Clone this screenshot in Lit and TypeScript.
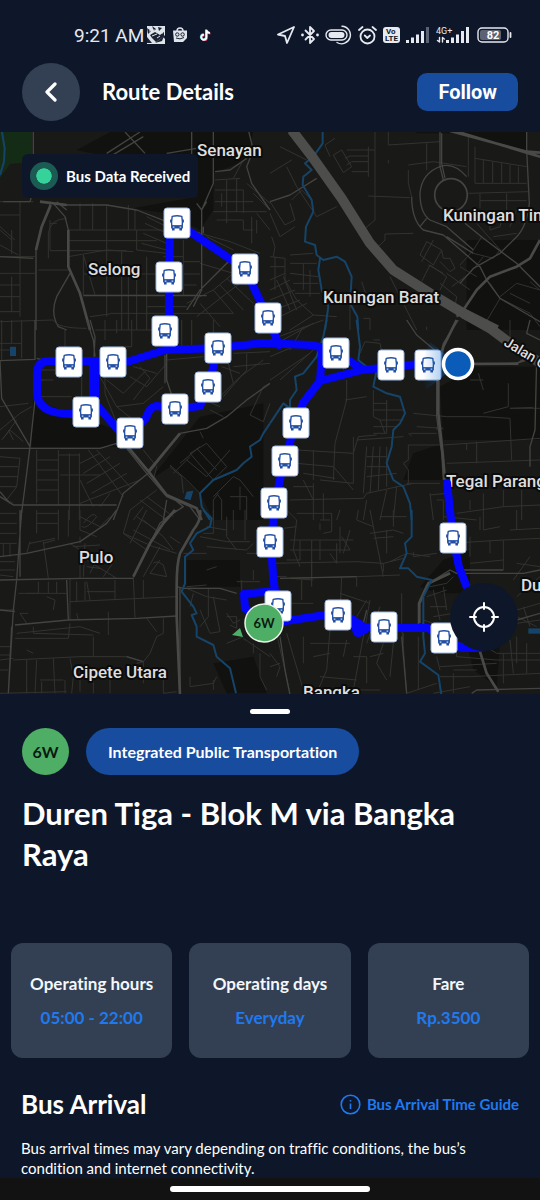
import { LitElement, html, css, svg } from "lit";
import { customElement, property } from "lit/decorators.js";

type Point = [number, number];

const STOPS: Point[] = [
  [177, 223], [169, 277], [165, 331], [245, 269], [268, 318], [218, 348],
  [336, 353], [391, 365], [428, 365], [69, 362], [113, 362], [86, 412],
  [130, 433], [175, 409], [208, 387], [296, 423], [285, 461], [274, 503],
  [270, 542], [278, 606], [338, 615], [384, 627], [453, 538], [444, 638],
];

const ROUTE = [
  "M169 348V277L170 235L177 223L245 269L262 305L268 318L279 345",
  "M86 414H72Q37 414 37 392V374Q37 361 50 361H130L165 350L218 348L262 343L310 345L330 349L348 360L362 369",
  "M94 361V402L120 432H132L146 418Q150 406 157 406L175 409L200 406L208 387L213 368L218 348",
  "M450 363L428 363L391 367L362 370L320 381L303 403L292 436L284 461L275 503L271 542L273 575L276 600",
  "M322 352L320 381",
  "M275 591L244 594L245 608L262 621L286 621L325 615L340 615L352 619L364 627L383 628H428L444 638L462 648H480",
  "M447 483L453 538L459 567L468 590L484 620",
];

const LABELS = [
  { x: 197, y: 156, text: "Senayan" },
  { x: 88, y: 275, text: "Selong" },
  { x: 323, y: 303, text: "Kuningan Barat" },
  { x: 443, y: 221, text: "Kuningan Timur" },
  { x: 446, y: 487, text: "Tegal Parang" },
  { x: 79, y: 563, text: "Pulo" },
  { x: 73, y: 678, text: "Cipete Utara" },
  { x: 303, y: 698, text: "Bangka" },
  { x: 521, y: 591, text: "Duren Tiga" },
];

/* The base map is kept as six tiles, each drawn on a grid of three units per map pixel. */
const TILES = [
  {
    x: 0, y: 130,
    shade: "M230 60L330 6H640V240L600 300L500 250L400 235L590 200V75H300ZM640 6H760L740 90L640 130Z",
    minor: "M0 215H100M60 215V560M0 255H60M0 290L45 330M35 300V372M0 345L55 375M0 300L35 330M150 270V360M150 280H170M145 385V310Q150 268 200 265M240 220V300M278 220V300M205 300H500M205 332H470M150 362H380M320 225V560M205 380L320 360L400 365M385 225V300M405 300V240M440 260L500 290M435 280L500 310M430 310L500 340M425 340L500 360M410 300V360L500 370M0 380H105M0 430H105M0 465H60M0 500H60M35 440V545M0 545H60M115 420H205M250 375L285 495M250 375V495H590M250 432H470M320 432V500M365 365V600M385 430V600M410 420V600M440 380V600M550 330V495M550 395H600M550 432H600M550 465H590M440 530H560M330 550H700M645 150L720 145M680 150V280M710 145V245M645 180H730V250M645 215H760M640 245H800M665 190V230M650 270H730V300H760M755 260V340M770 270V310M600 310L690 335L780 370M620 320L700 360M560 520L640 480L700 430M590 560L680 490L720 460M640 480L700 550M660 465L730 540M680 445L760 520M700 430L740 465M600 520L660 590M740 160L810 220M760 190L810 240M770 250L810 300M490 380H550M700 145L730 90M600 400L700 430M0 575L160 570M270 560L330 552",
    major: "M120 215L200 225L320 225L410 240L500 275L600 310M150 215V235L125 290L108 360V600M160 220L195 260L205 300V410L240 490L270 600M170 215L200 240M210 430L170 500Q150 550 175 590L200 600M100 0V180L90 215H10M320 70L420 6M330 80L430 20M375 6L435 70M640 0V160L605 240V480L580 530M575 0V130M605 240L590 220M605 240L620 215M745 0L760 60L740 110L755 160L810 240M740 85L690 120L645 125M500 70L590 55M640 60H660M610 290V310M250 497H620M0 380L100 385M700 380L600 480L560 540",
    heavy: "M120 215L200 225M205 300V410L240 490L270 600M108 360L125 290L152 225",
    water: "M5 0L14 55L12 95L0 135",
  },
  {
    x: 270, y: 130,
    shade: "M590 330L810 330V600H590ZM440 0H770V60L560 10H440Z",
    minor: "M30 50L110 90M0 130L65 90M50 110L80 170L140 260L200 230M65 210L95 180L120 205M0 215L45 285L75 270L60 220M0 250L30 320L75 290M315 0V270L280 300M295 198L420 203M315 203V200M230 60H315M190 75L215 60L245 110L220 128ZM180 80L165 45L195 25M225 85L240 78H295M230 105L245 95H295M245 125H295M295 50V140M355 0V45L510 35M355 100V90M470 40V120M415 120V160L425 200M415 105L490 95L590 110M595 20V110L595 140M615 50V160H770M615 85L770 110M640 90V160M668 95V160M695 100V160M720 105V160M745 110V160M595 190L775 185M630 190V235M630 212H770M710 190V270M660 270V300L690 290L700 250M740 240L720 290M325 350L345 330V312L430 310M470 335L515 360L490 405L450 375ZM490 330L455 395M515 360L520 385H540L555 415L540 425L510 395M480 405L530 440L510 480M475 405L520 430M455 455L480 405M510 460L560 500L555 530M530 430L600 480M570 405L610 360L635 320M610 370L670 385L690 360M570 410L620 440M545 470L600 430L640 380M690 500L740 460L810 480M700 510L780 550L810 590M720 490L780 520M660 460L690 505L640 590M780 455L810 480M360 440L440 600M60 375L130 370M45 385V450L80 510L130 555L200 560M60 400H140M60 430L145 440M70 460H145M75 490H150M0 380L45 385M0 410H45M15 380V480M0 450L45 430M0 480L60 450M0 510L75 480M0 545L90 510M30 560L110 520M60 600L130 555M100 400V480M120 420V500M20 450L60 540M40 440L80 540M275 455L290 500M240 490V600M5 320L15 350L10 380M280 565H300V600M470 600V590M620 280L700 370M670 320L740 310",
    major: "M0 215L60 195L140 145M510 0V110L520 150M515 10V100L525 145M770 0V60L778 220Q770 290 740 320L690 370L610 415L570 460M425 200Q425 270 460 300L520 315L630 410L650 450L690 505L810 575M450 190Q455 130 510 110Q550 95 590 140M450 190Q450 250 480 270L530 290L610 360M585 280L640 325L740 400L810 470M530 320L610 370M450 290L470 265",
    heavy: "M530 0L770 65L810 68M545 0L810 80M810 330L780 385L740 410L660 440L620 480L580 540L560 560",
    highway: "M65 0L130 85L215 205L300 340L370 420L480 490L580 550L680 600",
    water: "M158 0V40L130 80L105 100L125 120L100 140L98 165L125 210L130 245L108 290L105 335L135 345L140 375L160 390L200 380L225 395L245 440L240 520L262 560L265 600M150 385L145 420L155 480L175 530L165 600",
    ring: true,
  },
  {
    x: 0, y: 320,
    shade: "M100 240L350 330V380H95ZM450 480L600 290L790 250V600H640L600 520L510 440Z",
    minor: "M5 0V120M35 0V70M65 0V115M0 70H65M0 90H30M160 0Q170 25 260 25M285 30H480M315 0V60M395 0V80H320M350 0V40M195 30V100M245 170V240M115 230H215M110 180H160M115 150H165M0 260L85 250M0 330L60 280L95 260M5 360L30 330L70 365M10 355L50 300M25 330L40 360M300 170L350 260L430 250L490 200M320 180L370 220L440 150M390 170L440 200L500 130M350 260L400 300M315 170V220L350 310M400 140L470 160M420 140L450 175L400 240M500 120L610 110M575 0V80M545 0V80M640 0V40M700 100L810 95M665 140L720 160M680 110L700 190M740 100V150L670 230M700 140L810 130M640 250L720 170L790 120M590 230L660 260M520 230L560 250M630 270L670 290M750 285L790 305L810 250M750 285L790 200L810 190M0 410L60 415M0 440L55 440M0 470H55M0 500H50M0 530L40 550M60 415L50 500L20 540M110 390V550M175 390V555M208 400V600M238 400V600M175 405H240M110 420H175M110 450H175M110 480H175M110 510H175M180 465H300M265 390L370 530M290 390L390 500M240 430L300 400M250 460L330 410M260 490L360 430M275 520L380 460M240 550L420 480M240 480L280 560M300 560L330 520M570 400L620 370L680 440L640 480ZM560 420L620 470L690 390M590 385L650 450M510 435L560 480L600 520M540 430L600 380M520 460L570 410M510 440L545 470L550 520M640 530L700 470L720 480L760 530M650 520L665 540V600M655 520L640 540V600M690 530H740V600M720 500V570M420 540L500 600M440 530L520 590M390 570L470 510M400 600L430 560M600 335L610 355M430 390L470 440L460 480",
    major: "M105 0V118L0 122M0 122L5 235L90 380M110 115L130 120M105 240L90 380L75 500L62 600M260 0L280 60L285 110M270 0L285 50L282 110M95 385H300L350 370M380 385L440 460L500 530L570 560L600 600M540 340L450 455L370 520L340 600M540 340L620 325L680 290L740 240L810 190M500 90V180L540 300M0 385H95M0 530L40 555H350M0 515L30 550M500 540L490 600M525 540L550 560L490 600M495 105V190",
    heavy: "M375 370L450 460L500 525L590 565L605 600M540 340L445 455",
    water: "M810 310L790 340L780 360L750 380L755 410L730 430L710 450L640 480L600 520L605 560L630 600",
    ponds: "M30 80H48V108H30ZM560 515L580 512L572 540L553 536Z",
  },
  {
    x: 270, y: 320,
    shade: "M620 140H810V360H520L510 200ZM430 400L520 370V480H400Z",
    minor: "M0 60L160 0M20 70L130 10M60 90L100 20M0 110L70 80M0 180L120 100M30 180L130 90M310 60H330M270 100L285 65L330 70L335 95M230 180V240L195 370L190 480M240 70L220 150M225 240L290 230M310 210V290L330 300H400M310 250H350M310 270H400M350 240V340M310 320H380M310 340H350M330 300L345 340M260 360L400 350M430 280L530 290L640 290L720 295M510 290L500 330M440 320L520 325M415 340L425 348M720 0V60M715 190V260L640 280M720 265H810M720 295L725 420M625 160L640 210M600 180H640M415 375H520L810 355M415 375V420L400 430L415 450V490M590 370V390M620 365V430M530 430L810 420M720 265L790 262M80 390L250 400L265 350L320 345M130 390V480M80 430L190 440L250 510M100 460L195 475M150 480L250 490L250 350M60 540L280 535L290 520L430 490M290 380L280 520M310 380L300 520M330 380L325 510M350 380V500M290 410H350M290 440H350M290 470L380 460M350 510L330 600M380 500L370 600M100 480L130 540M130 490V600M160 520V600M70 500H130M290 540L280 600M200 600L210 570M420 340H500M480 520L490 600M480 525L530 520M500 540H520V600M560 580L700 560L810 555M600 570V540M640 570V520M700 510V560M755 510V600M410 490H510",
    major: "M410 0L440 45L500 95M530 60L500 120L500 290L515 400L520 480M565 0L520 70L510 120M600 130H740L770 120M740 130L775 110L810 120M780 0L770 40L810 60M800 120L795 330L780 380V440",
    heavy: "M560 0L520 80L505 140V280L518 400L525 480M600 132L745 131",
    highway: "M580 -20L660 25L740 85L830 140",
    water: "M170 0L160 50L140 110L100 160L75 170L80 210L60 240V265L40 250L0 310M260 0L270 80L265 120L290 140L320 150L310 200L350 220L390 230L405 280L390 310L370 330L365 380L350 430L370 480L400 500L420 550L425 600",
  },
  {
    x: 0, y: 510,
    shade: "M560 150H720V230H560ZM640 460L760 440L800 550H680Z",
    minor: "M0 10H50M0 40H50M0 70H50M10 100V140M0 100H50M30 100V140M0 155H45M0 180H45M0 195L40 200M110 0V70M175 0V90M205 0V80M110 10H175M110 40H175M90 100L165 85M90 95L80 130M130 95L145 205M165 90L130 100M240 20L300 50L330 20M240 60L290 80M240 80V100M250 40Q280 0 290 20Q260 60 245 50M240 0V60M390 0L370 70L460 110L530 130M410 20L470 60M400 60L510 120M440 0L390 100M430 30L490 80M490 80L520 120M480 150L450 190L500 200L490 165Q470 150 460 160M510 80L540 100M370 70L440 120M480 110L430 200M210 100L240 120V205M255 100L250 200M220 110L300 105M260 150L350 205M290 150L270 190M345 150L310 200M260 170L300 175M210 205V330M115 215V250H55M80 250H200M145 215V250M170 215V250M85 310H60L80 340M230 215V275M255 215V270M210 275L530 260M260 215L270 270M345 210V270M260 245H345M100 350V370L280 375M140 260L165 270L160 300M45 385H205L210 340M50 370L240 350L300 370M230 310L235 330M325 305V375M280 380V440M400 200L405 325M430 210V265M0 300H45M0 435H30M0 450L40 445M80 420L100 430M40 450L240 440L380 440L430 455M80 450V550M110 450L105 550M160 445L165 550M120 510H190M125 515V550M195 510V550M210 445L220 500L215 550M240 470V545M280 510V550M330 500V550M430 455L450 430L470 380L490 370V325M440 325L470 365M410 460L430 455V520M490 500V550M0 410H35M0 480H25M0 550L200 545M570 500V530L640 520M640 510V540M490 550L530 545M560 235L620 260L680 270M580 250L570 290M625 235V320L600 350M600 300L630 370L660 365L640 260M680 310L700 340L720 330M680 320H710V355L690 345M680 400L730 380M640 0V70H610M680 20V80L710 120M700 0V60M735 0V90M620 50L680 60M600 80L680 95H750M620 110L740 120M740 120L760 100M620 180L650 170M760 180V210M710 215H780M740 130H810M725 210V250M550 130H620M560 230L620 225M650 500L640 520M760 400V430M730 385L810 440M780 430V500L800 540",
    major: "M65 0L50 210L40 300L25 550M0 140L80 130L240 95L320 40L350 0M0 210L240 205L400 205M400 200L450 100L480 40L530 0M45 345L205 330L410 325L530 318M35 350L25 550M200 210L205 330M530 230L550 235L660 235L710 250M0 300L45 305M540 230V550M60 0V200M380 440L430 455",
    heavy: "M600 0Q605 30 580 60L540 130Q530 160 530 230V320L540 555M400 200L450 100L490 40L525 0",
    water: "M610 0L635 25L630 50L590 70L570 100L580 120L555 140V220L545 245L580 290L590 310L575 315L590 350L590 380L640 405L650 440L690 475L708 550",
  },
  {
    x: 270, y: 510,
    shade: "M520 150L600 120V250H500L450 230ZM590 400H690L680 530L610 480Z",
    minor: "M50 0L80 30L70 120M0 60L80 50M80 10L185 10M185 10V65L160 70M60 90H250M60 120H240M125 90V200M90 90V150H50M150 90V150M200 100V160L180 130M70 120L90 170M210 50V130M240 60L220 130M215 80L240 120M265 0L260 30L310 50L300 0M310 50L340 200M300 70L370 60L400 70M330 20H410M350 60V130M370 0V50M310 85L370 80M260 155L340 160L400 145M0 160L260 155M360 155L410 130L480 140M60 205L260 200L390 195M60 205L130 210M95 210V270M125 150V230M260 200V230M0 200H50M215 200L210 310M340 160V185M395 250V340L410 550M445 380V540M500 440L510 480M430 125V140L500 130M520 20L620 30M540 100L700 90L810 85M600 80V140M640 0V60L690 50M630 20V60M660 90V130M740 0V60M720 60L810 55M700 90V180M600 160L700 150M740 160L810 170M780 140L730 210M810 200L740 260M740 300L810 280M740 320L800 350M760 290L780 350M740 340L810 330M480 230L530 220L550 200M470 260L530 240M480 290H530M490 320L550 310M490 240L510 330M520 230L530 300M460 330L550 360M555 380L560 440M560 400H630L680 430H810M560 440L680 450H810M510 470L680 460M550 480H620M720 390L730 490M740 380V460M770 400V490M510 500L600 500L810 490M550 490V550M490 550L600 530M700 430V520M290 270L260 320M300 270L280 380L250 540M330 290L290 400M180 360L170 480L140 550M120 400H240M130 440L180 430M230 390L220 440M250 440H290V520M150 500L260 510M20 370L60 550M50 370L100 540M100 380V460M0 430L30 470L20 500M0 470L30 460M340 400L320 460L350 510M300 440L340 430M370 400L360 500M410 550L500 520M240 540H330M210 250L300 280M60 280H130M400 370V400M150 30H180M150 40V60",
    major: "M810 180L760 190H560L540 180L500 205L470 225L445 280V345M260 200L30 205M540 190L480 220M560 180H700M630 425L650 490L685 545M605 550L620 540L810 535M60 555L45 480L30 380M270 380L290 300M395 380L410 550M740 330L810 310",
    heavy: "M540 190L475 220L448 280V340M630 425L650 490L685 545",
    water: "M425 0V80L405 100L410 130L390 175L415 175L440 200L485 210L460 260V380L465 430L450 455L505 495L515 560",
    pools: "M775 363H810",
  },
];

const tile = (t: any) => svg`
  <g transform="translate(${t.x} ${t.y}) scale(.33333)">
    <path class="shade" d=${t.shade}></path>
    <path class="minor" d=${t.minor}></path>
    <path class="major" d=${t.major}></path>
    <path class="heavy" d=${t.heavy}></path>
    <path class="water" d=${t.water}></path>
    ${t.ring ? svg`<circle class="ring" cx="543" cy="195" r="49"></circle>` : ""}
    ${t.highway ? svg`<path class="highway" d=${t.highway}></path>` : ""}
    ${t.ponds ? svg`<path class="pond" d=${t.ponds}></path>` : ""}
    ${t.pools ? svg`<path class="pool" d=${t.pools}></path>` : ""}
  </g>`;

@customElement("route-map")
export class RouteMap extends LitElement {
  static styles = css`
    :host { display: block; position: relative; overflow: hidden; background: #191917; }
    .canvas { position: absolute; inset: 0; width: 100%; height: 100%; display: block; }
    path, .ring { fill: none; stroke-linejoin: round; }
    .shade { fill: #11110f; }
    .minor { stroke: #323230; stroke-width: 3; }
    .major { stroke: #434341; stroke-width: 4; }
    .heavy { stroke: #494947; stroke-width: 8; }
    .ring { stroke: #454543; stroke-width: 5; }
    .highway { stroke: #4d4d4c; stroke-width: 30; }
    .water { stroke: #164468; stroke-width: 6; }
    .pool { stroke: #164468; stroke-width: 16; }
    .pond { fill: #164468; }
    .park { fill: #142b15; }
    .route { stroke: #0505fa; stroke-width: 8; stroke-linecap: round; }
    .route-wide { stroke: #0505fa; stroke-width: 10; }
    .label {
      font: 500 17px Roboto, sans-serif;
      fill: #dedede; stroke: #0b0b0b; stroke-width: 4px; stroke-linejoin: round; paint-order: stroke;
    }
    .street { font-size: 14px; }
    .pin { fill: #fff; stroke: #9db8e4; }
    .glyph { stroke: #2450a4; stroke-width: 1.4; }
    .solid { fill: #2450a4; }
    .lamp { stroke: #fff; stroke-width: 1; }
    .badge { fill: #4eae66; stroke: #eaf5ea; stroke-width: 1.5; }
    .badge-text { font: 700 13px Lato, sans-serif; fill: #0b1a10; text-anchor: middle; }
    .arrow { fill: #4eae66; }
    .beam { fill: url(#beam); }
    .me { fill: #0b5cb8; stroke: #fff; stroke-width: 3.5; }
    .status {
      position: absolute; left: 22px; top: 22px; display: flex; align-items: center; gap: 8px;
      padding: 8px; border-radius: 6px; background: #0e172a; color: #fff;
      font: 700 15px/28px Lato, sans-serif; font-variant-ligatures: none;
    }
    .pulse { width: 16px; height: 16px; border: 6px solid #1c5b53; border-radius: 50%; background: #35d399; background-clip: padding-box; }
    .locate {
      position: absolute; right: 22px; bottom: 43px; width: 68px; height: 68px; padding: 0; border: 0;
      border-radius: 50%; background: #0e172a; display: grid; place-items: center; cursor: pointer;
    }
    .locate path, .locate circle { stroke: #fff; stroke-width: 2; fill: none; stroke-linecap: round; }
  `;

  render() {
    return html`
      <svg class="canvas" viewBox="0 132 540 562" preserveAspectRatio="xMidYMid slice" role="img" aria-label="Route map">
        <defs>
          <linearGradient id="beam" x1="1" x2="0"><stop offset="0" stop-color="#0b6cd0" stop-opacity=".6"></stop><stop offset="1" stop-color="#0b6cd0" stop-opacity="0"></stop></linearGradient>
          <g id="stop">
            <rect class="pin" x="-13" y="-15" width="26" height="30" rx="3"></rect>
            <path class="glyph" d="M-4.8 -6.6Q0 -7.8 4.8 -6.6Q5.8 -1 5.2 3H-5.2Q-5.8 -1 -4.8 -6.6Z"></path>
            <path class="glyph" d="M-6.2 -3.4V-.4M6.2 -3.4V-.4"></path>
            <path class="solid" d="M-5.9 2.4H5.9V5.4H5V7.6H2.4V5.6H-2.4V7.6H-5V5.4H-5.9Z"></path>
            <path class="lamp" d="M-4.2 4.1H-2.6M2.6 4.1H4.2"></path>
          </g>
        </defs>
        <path class="park" d="M0 132H32V162L10 164L0 178Z"></path>
        ${TILES.map(tile)}
        ${LABELS.map((l) => svg`<text class="label" x=${l.x} y=${l.y}>${l.text}</text>`)}
        <text class="label street" transform="translate(503 345) rotate(31)">Jalan Gatot Subroto</text>
        ${ROUTE.map((d) => svg`<path class="route" d=${d}></path>`)}
        <path class="route-wide" d="M94 362V402M354 622L358 632L366 628"></path>
        ${STOPS.map(([x, y]) => svg`<use href="#stop" x=${x} y=${y}></use>`)}
        <path class="beam" d="M458 364L430 342Q418 364 426 390Z"></path>
        <circle class="me" cx="458" cy="364" r="14.5"></circle>
        <path class="arrow" d="M232 635L240 628L243 637Z"></path>
        <circle class="badge" cx="264" cy="623" r="19"></circle>
        <text class="badge-text" x="264" y="628">6W</text>
      </svg>
      <div class="status" role="status"><span class="pulse"></span>Bus Data Received</div>
      <button class="locate" aria-label="Centre on my location">
        <svg width="30" height="30" viewBox="0 0 30 30"><circle cx="15" cy="15" r="10"></circle><path d="M15 1V7M15 23V29M1 15H7M23 15H29"></path></svg>
      </button>`;
  }
}

@customElement("info-card")
export class InfoCard extends LitElement {
  @property() heading = "";
  @property() value = "";
  static styles = css`
    :host {
      display: flex; flex-direction: column; align-items: center; text-align: center;
      padding: 24px 8px 23px; border-radius: 12px; background: #334053; font: 700 17px/34px Lato, sans-serif;
      font-variant-ligatures: none;
    }
    .heading { color: #f4f7fb; }
    .value { color: #2079ee; }
  `;
  render() {
    return html`<span class="heading">${this.heading}</span><span class="value">${this.value}</span>`;
  }
}

@customElement("app-root")
export class AppRoot extends LitElement {
  static styles = css`
    :host {
      display: flex; flex-direction: column; min-height: 100vh; background: #0e172a; color: #fff;
      font-family: Lato, sans-serif; font-variant-ligatures: none;
    }
    svg { display: block; flex: none; }
    .system { display: flex; align-items: center; height: 24px; padding: 23px 28px 5px 74px; color: #e6e9ef; font: 19px Roboto, sans-serif; }
    .notices { display: flex; align-items: center; gap: 8px; margin-left: 3px; }
    .signals { display: flex; align-items: center; gap: 6px; margin-left: auto; }
    .signals svg { fill: none; stroke: #e6e9ef; stroke-width: 1.8; stroke-linejoin: round; stroke-linecap: round; }
    .signals .fill { fill: #e6e9ef; stroke: none; }
    .signals .dim { fill: #5a6273; stroke: none; }
    .tiny { font: 9px Roboto, sans-serif; fill: #e6e9ef; stroke: none; }
    .tiny-bold { font: 700 8px Roboto, sans-serif; fill: #0e172a; stroke: none; }
    .charge { font: 700 11px Roboto, sans-serif; fill: #fff; stroke: none; text-anchor: middle; }
    .top { display: flex; align-items: center; gap: 22px; padding: 11px 22px; }
    .back { width: 58px; height: 58px; padding: 0; border: 0; border-radius: 50%; background: #334053; display: grid; place-items: center; cursor: pointer; }
    .top h1 { margin: 0; font-size: 22px; line-height: 28px; flex: 1; }
    .follow { padding: 0 21px; border: 0; border-radius: 10px; background: #184c9f; color: #fff; font: 700 20px/38px Roboto, sans-serif; cursor: pointer; }
    route-map { flex: 1 0 400px; }
    .sheet { display: flex; flex-direction: column; padding: 15px 11px 0; }
    .handle { align-self: center; width: 40px; height: 5px; border-radius: 3px; background: #fff; }
    .tags { display: flex; gap: 17px; padding: 14px 11px 0; font-size: 16px; font-weight: 700; line-height: 47px; }
    .code { width: 47px; border-radius: 50%; background: #4eae66; color: #0b1a10; text-align: center; }
    .kind { padding: 0 22px; border-radius: 24px; background: #184c9f; }
    .name { margin: 0; padding: 18px 11px 68px; font-size: 31px; line-height: 41px; }
    .facts { display: grid; grid-template-columns: repeat(3, 1fr); gap: 17px; }
    .arrival { display: flex; align-items: center; justify-content: space-between; padding: 30px 10px 0; }
    .arrival h2 { margin: 0; font-size: 26px; line-height: 32px; }
    .guide { display: flex; align-items: center; gap: 6px; color: #2079ee; font-size: 15px; font-weight: 700; text-decoration: none; }
    .note { margin: 0; padding: 18px 10px 0; font-size: 15px; line-height: 20px; }
    .gesture { display: flex; justify-content: center; padding: 8px 0; background: #121212; }
    .gesture span { width: 200px; height: 6px; border-radius: 3px; background: #fff; }
  `;

  render() {
    return html`
      <div class="system">
        <span>9:21 AM</span>
        <div class="notices">
          <svg width="18" height="18" viewBox="0 0 18 18"><rect width="18" height="18" fill="#dfe3ea"></rect><path d="M0 2L4 5L1 8ZM5 0L9 3L7 5ZM11 1L15 2L12 5ZM3 9L8 6L13 9L17 6V10L9 16L5 12ZM0 11L5 17H0ZM16 11L18 9V13ZM8 17L12 14L17 10L15 15Z" fill="#1a2233"></path><path d="M5 10L10 8M10 12L13 10M2 5L8 4M11 6L16 7" stroke="#dfe3ea"></path></svg>
          <svg width="14" height="16" viewBox="0 0 14 16"><path d="M4 4Q4 1 7 1Q10 1 10 4" fill="none" stroke="#dfe3ea" stroke-width="1.4"></path><path d="M0 3.5H14V11L10 15H1Z" fill="#dfe3ea"></path><circle cx="4.3" cy="7.5" r="1.7" fill="none" stroke="#1a2233"></circle><circle cx="9.6" cy="7.5" r="1.7" fill="none" stroke="#1a2233"></circle><path d="M3 11Q7 13 11 10.5" fill="none" stroke="#1a2233"></path></svg>
          <svg width="22" height="12" viewBox="0 0 24 14"><g fill="none" stroke-width="2.2" transform="translate(6 0)"><path d="M6.5 1V9.5A3 3 0 1 1 3.6 6.6M6.5 1.5Q7.5 4.5 10.5 4.6" stroke="#d0314f" transform="translate(.8 .7)"></path><path d="M6.5 1V9.5A3 3 0 1 1 3.6 6.6M6.5 1.5Q7.5 4.5 10.5 4.6" stroke="#36c9cf" transform="translate(-.6 -.4)"></path><path d="M6.5 1V9.5A3 3 0 1 1 3.6 6.6M6.5 1.5Q7.5 4.5 10.5 4.6" stroke="#fff"></path></g></svg>
        </div>
        <div class="signals">
          <svg width="18" height="18" viewBox="0 0 18 18"><path d="M17 1L1 8.5L8 10L10 17Z"></path></svg>
          <svg width="18" height="20" viewBox="0 0 18 20"><path d="M4.5 5.5L13 14L9 18V2L13 6L4.5 14.5"></path><circle class="fill" cx="1.5" cy="10" r="1.4"></circle><circle class="fill" cx="16.5" cy="10" r="1.4"></circle></svg>
          <svg width="27" height="20" viewBox="0 0 27 20"><rect x="1" y="5" width="21" height="10" rx="5" stroke-width="1.4"></rect><rect class="fill" x="3.5" y="7" width="16" height="6" rx="3"></rect><path d="M17 1.2A8.8 8.8 0 1 1 12 17.5" stroke-width="1.4"></path></svg>
          <svg width="19" height="19" viewBox="0 0 19 19"><circle cx="9.5" cy="10.5" r="7"></circle><path d="M1 4L4.5 1M18 4L14.5 1M6.8 9.5L9.3 12L12 9.5"></path></svg>
          <svg width="17" height="16" viewBox="0 0 17 16"><rect class="fill" width="17" height="16" rx="3"></rect><text class="tiny-bold" x="3" y="7">Vo</text><text class="tiny-bold" x="2" y="14">LTE</text></svg>
          <svg width="24" height="16" viewBox="0 0 24 16"><path class="fill" d="M0 13H3V16H0ZM5 10.5H8V16H5ZM10 7.5H13V16H10ZM15 4H18V16H15Z"></path><path class="dim" d="M20 0H23V16H20Z"></path></svg>
          <svg width="35" height="22" viewBox="0 0 35 22"><text class="tiny" x="0" y="10">4G+</text><path class="fill" d="M10 16H13V19H10ZM15 13.5H18V19H15ZM20 10.5H23V19H20ZM25 7H28V19H25ZM30 3H33V19H30Z"></path><path d="M3.5 13.5V18L1.5 16.5M6.5 18V13.5L8.3 15" stroke-width="1.4"></path></svg>
          <svg width="35" height="16" viewBox="0 0 35 16"><rect x="1" y="1" width="30" height="14" rx="4" stroke-width="1.4"></rect><rect x="3" y="3" width="21" height="10" rx="2" fill="#5a6273" stroke="none"></rect><path d="M33.5 6V10"></path><text class="charge" x="16" y="12">82</text></svg>
        </div>
      </div>
      <header class="top">
        <button class="back" aria-label="Back"><svg width="14" height="20" viewBox="0 0 14 20"><path d="M11 2L3 10L11 18" fill="none" stroke="#fff" stroke-width="3.2" stroke-linecap="round" stroke-linejoin="round"></path></svg></button>
        <h1>Route Details</h1>
        <button class="follow">Follow</button>
      </header>
      <route-map></route-map>
      <main class="sheet">
        <span class="handle"></span>
        <div class="tags"><span class="code">6W</span><span class="kind">Integrated Public Transportation</span></div>
        <h2 class="name">Duren Tiga - Blok M via Bangka Raya</h2>
        <section class="facts">
          <info-card heading="Operating hours" value="05:00 - 22:00"></info-card>
          <info-card heading="Operating days" value="Everyday"></info-card>
          <info-card heading="Fare" value="Rp.3500"></info-card>
        </section>
        <section class="arrival">
          <h2>Bus Arrival</h2>
          <a class="guide" href="#guide"><svg width="21" height="21" viewBox="0 0 21 21"><circle cx="10.5" cy="10.5" r="9.3" fill="none" stroke="#2079ee" stroke-width="1.6"></circle><path d="M10.5 9.5V15M10.5 6V7.4" stroke="#2079ee" stroke-width="1.6"></path></svg>Bus Arrival Time Guide</a>
        </section>
        <p class="note">Bus arrival times may vary depending on traffic conditions, the bus’s condition and internet connectivity.</p>
      </main>
      <div class="gesture"><span></span></div>`;
  }
}
